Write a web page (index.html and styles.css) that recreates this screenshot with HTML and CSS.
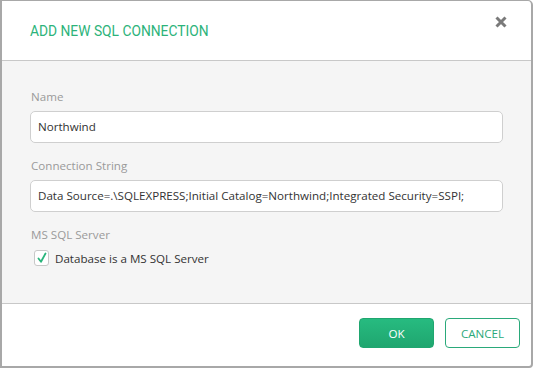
FILE: index.html
```html
<!DOCTYPE html>
<html>
<head>
<meta charset="utf-8">
<link rel="stylesheet" href="styles.css">
</head>
<body>
<div class="dialog">
  <div class="header">
    <h1 class="title">ADD NEW SQL CONNECTION</h1>
    <span class="close">
      <svg width="12" height="12" viewBox="0 0 12 12"><path d="M1.5 1.5 L10.5 10.5 M10.5 1.5 L1.5 10.5" stroke="#7a7a7a" stroke-width="3" stroke-linecap="butt"/></svg>
    </span>
  </div>
  <div class="body">
    <label class="label">Name</label>
    <div class="input">Northwind</div>
    <label class="label">Connection String</label>
    <div class="input">Data Source=.\SQLEXPRESS;Initial Catalog=Northwind;Integrated Security=SSPI;</div>
    <label class="label">MS SQL Server</label>
    <div class="check-row">
      <span class="checkbox">
        <svg width="12" height="12" viewBox="0 0 12 12"><path d="M2.5 6.5 L5 9.8 L9.5 1.5" fill="none" stroke="#2ab57c" stroke-width="1.8" stroke-linecap="round" stroke-linejoin="round"/></svg>
      </span>
      <span class="check-text">Database is a MS SQL Server</span>
    </div>
  </div>
  <div class="footer">
    <button class="btn btn-ok">OK</button>
    <button class="btn btn-cancel">CANCEL</button>
  </div>
</div>
</body>
</html>
```
FILE: styles.css
```css
*, *::before, *::after { box-sizing: border-box; }
html, body { margin: 0; padding: 0; background: #fff; }
body { font-family: "Open Sans", "Liberation Sans", sans-serif; font-size: 11.6px; color: #333; }
.dialog {
  width: 533px;
  height: 368px;
  border: 2px solid #a8a8a8;
  border-top-width: 1px;
  border-radius: 0 5px 4px 0;
  display: flex;
  flex-direction: column;
  overflow: hidden;
}
.header {
  height: 60px;
  flex: none;
  display: flex;
  justify-content: space-between;
  align-items: flex-start;
  border-bottom: 1px solid #c8c8c8;
  padding: 0 24px 0 28px;
}
.title {
  margin: 22px 0 0;
  font-family: Roboto, "Liberation Sans", sans-serif;
  font-weight: 400;
  font-size: 13.8px;
  color: #2cb37a;
}
.close {
  margin-top: 15px;
  display: flex;
}
.body {
  flex: 1;
  background: #f5f5f5;
  border-bottom: 1px solid #c8c8c8;
  padding: 28px 28px 0 28px;
  display: flex;
  flex-direction: column;
}
.label {
  color: #9a9a9a;
  line-height: 16px;
  margin-bottom: 6px;
  padding-left: 1px;
}
.input {
  height: 32px;
  background: #fff;
  border: 1px solid #cfcfcf;
  border-radius: 5px;
  padding: 0 7px;
  line-height: 30px;
  margin-bottom: 15px;
  white-space: nowrap;
}
.check-row {
  display: flex;
  align-items: center;
  margin-top: 1px;
  padding-left: 4px;
}
.checkbox {
  width: 15px;
  height: 16px;
  border: 1px solid #c8c8c8;
  border-radius: 3px;
  background: #fff;
  display: flex;
  align-items: center;
  justify-content: center;
  margin-right: 6px;
}
.footer {
  height: 62px;
  flex: none;
  display: flex;
  justify-content: flex-end;
  align-items: flex-start;
  padding: 14px 11px 0 0;
  gap: 11px;
}
.btn {
  width: 75px;
  height: 30px;
  border-radius: 4px;
  font-family: "Open Sans", "Liberation Sans", sans-serif;
  font-size: 11.6px;
  padding: 0;
}
.btn-ok {
  background: linear-gradient(#27bb80, #1fa66f);
  border: 1px solid #1fa66f;
  color: #fff;
}
.btn-cancel {
  background: #fff;
  border: 1px solid #2aa97a;
  color: #2aa97a;
}
```
